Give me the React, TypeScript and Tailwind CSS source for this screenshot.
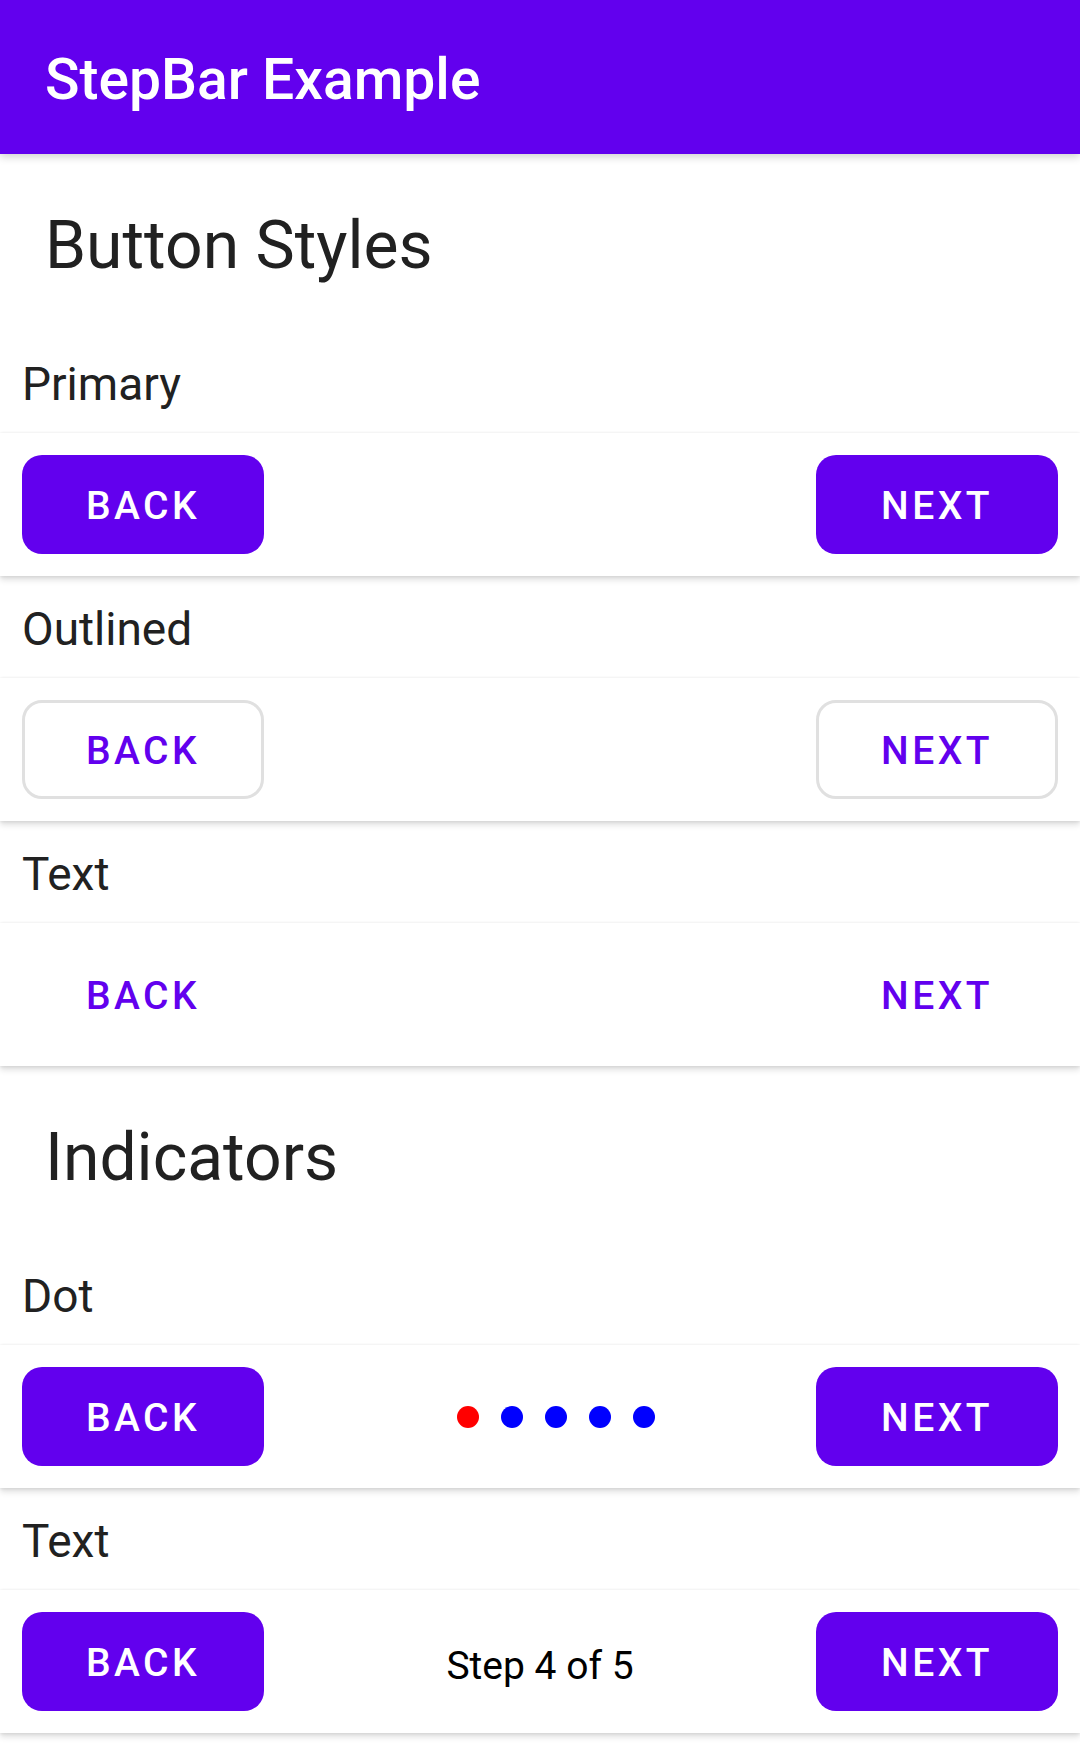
import React from "react";

type Variant = "primary" | "outlined" | "text";

function Btn({ label, variant }: { label: string; variant: Variant }) {
  const base =
    "w-[242px] h-[99px] rounded-[20px] flex items-center justify-center pt-[4px] text-[39px] font-medium tracking-[0.0892em] leading-none shrink-0";
  if (variant === "primary")
    return <div className={`${base} bg-[#6200ee] text-white`}>{label}</div>;
  if (variant === "outlined")
    return (
      <div className={`${base} border-[3px] border-[#e0e0e0] bg-white text-[#6200ee]`}>{label}</div>
    );
  return <div className={`${base} text-[#6200ee]`}>{label}</div>;
}

function Card({ children }: { children: React.ReactNode }) {
  return (
    <div className="relative z-10 h-[143px] bg-white px-[22px] flex items-center justify-between shadow-[0_4px_6px_rgba(0,0,0,0.12),0_1px_3px_rgba(0,0,0,0.08),0_-1px_2px_rgba(0,0,0,0.03)]">
      {children}
    </div>
  );
}

function Label({ text }: { text: string }) {
  return (
    <div className="h-[102px] flex items-center pl-[22px] pt-[4px] text-[46px] text-[#212121] leading-none">
      {text}
    </div>
  );
}

function Heading({ text }: { text: string }) {
  return (
    <div className="h-[177px] flex items-center pl-[45px] pt-[6px] text-[66px] text-[#212121] leading-none">
      {text}
    </div>
  );
}

export default function App() {
  return (
    <div
      className="w-[1080px] h-[1761px] bg-white overflow-hidden"
      style={{ fontFamily: "Roboto, 'Noto Sans', sans-serif" }}
    >
      <div className="relative z-20 h-[154px] bg-[#6200ee] flex items-center pl-[45px] pt-[4px] shadow-[0_3px_8px_rgba(0,0,0,0.18)]">
        <span className="text-white text-[57px] font-medium leading-none">StepBar Example</span>
      </div>
      <Heading text="Button Styles" />
      <Label text="Primary" />
      <Card>
        <Btn label="BACK" variant="primary" />
        <Btn label="NEXT" variant="primary" />
      </Card>
      <Label text="Outlined" />
      <Card>
        <Btn label="BACK" variant="outlined" />
        <Btn label="NEXT" variant="outlined" />
      </Card>
      <Label text="Text" />
      <Card>
        <Btn label="BACK" variant="text" />
        <Btn label="NEXT" variant="text" />
      </Card>
      <Heading text="Indicators" />
      <Label text="Dot" />
      <Card>
        <Btn label="BACK" variant="primary" />
        <div className="flex-1 flex items-center justify-center pl-[32px] gap-[22px]">
          <div className="w-[22px] h-[22px] rounded-full bg-[#ff0000]" />
          <div className="w-[22px] h-[22px] rounded-full bg-[#0000ff]" />
          <div className="w-[22px] h-[22px] rounded-full bg-[#0000ff]" />
          <div className="w-[22px] h-[22px] rounded-full bg-[#0000ff]" />
          <div className="w-[22px] h-[22px] rounded-full bg-[#0000ff]" />
        </div>
        <Btn label="NEXT" variant="primary" />
      </Card>
      <Label text="Text" />
      <Card>
        <Btn label="BACK" variant="primary" />
        <div className="flex-1 flex items-center justify-center">
          <span className="block pt-[10px] text-[39px] text-black leading-none">Step 4 of 5</span>
        </div>
        <Btn label="NEXT" variant="primary" />
      </Card>
    </div>
  );
}
